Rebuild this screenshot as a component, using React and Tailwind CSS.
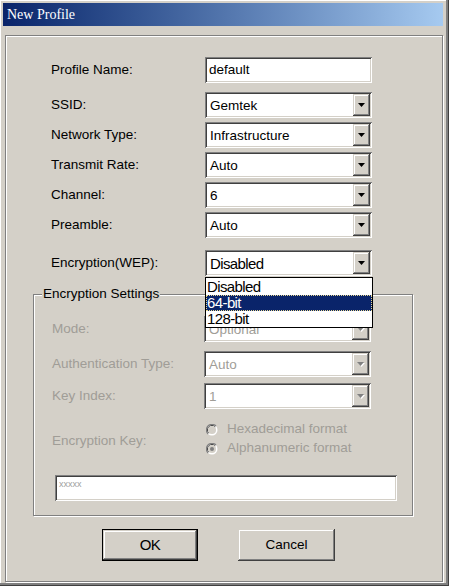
import React from "react";

const SANS = "font-['Liberation_Sans',Arial,sans-serif]";
const NARROW = "font-['Liberation_Sans',Arial,sans-serif] tracking-[-0.6px]";

// sunken 2px field edge, like a Win2000 edit box
const sunken =
  "shadow-[inset_1px_1px_#808080,inset_-1px_-1px_#ffffff,inset_2px_2px_#404040,inset_-2px_-2px_#d4d0c8]";
const raised =
  "shadow-[inset_-1px_-1px_#404040,inset_1px_1px_#d4d0c8,inset_-2px_-2px_#808080,inset_2px_2px_#ffffff]";

const Arrow = ({ disabled }) => (
  <div className={`w-[17px] h-full bg-[#d4d0c8] flex items-center justify-center ${raised}`}>
    <svg width="8" height="5" viewBox="0 0 8 5">
      {disabled && <path d="M1 1h7L4.5 5z" fill="#ffffff" />}
      <path d="M0 0h7L3.5 4z" fill={disabled ? "#808080" : "#000000"} />
    </svg>
  </div>
);

const Combo = ({ value, disabled, narrow, children }) => (
  <div className={`relative w-[167px] h-[26px] bg-white p-[2px] flex ${sunken}`}>
    <div
      className={`flex-1 flex items-center pl-[3px] pt-[2px] ${
        narrow ? `${NARROW} text-[15px]` : `${SANS} text-[13.5px]`
      } ${disabled ? "text-[#a09d97]" : "text-black"}`}
    >
      {value}
    </div>
    <Arrow disabled={disabled} />
    {children}
  </div>
);

const Row = ({ label, className = "", labelW = "w-[154px]", pl = "pl-[45px]", disabled, children }) => (
  <div className={`flex items-center h-[26px] ${pl} ${className}`}>
    <div className={`${labelW} ${SANS} text-[13.5px] ${disabled ? "text-[#a09d97]" : "text-black"}`}>
      {label}
    </div>
    {children}
  </div>
);

const Radio = ({ checked }) => (
  <svg width="12" height="12" viewBox="0 0 12 12">
    <circle cx="6" cy="6" r="5.5" fill="#ffffff" />
    <path d="M10 2 A5.5 5.5 0 0 0 2 10" fill="none" stroke="#808080" strokeWidth="1.2" />
    <path d="M9.2 2.8 A4.5 4.5 0 0 0 2.8 9.2" fill="none" stroke="#404040" strokeWidth="1" />
    <circle cx="6" cy="6" r="4" fill="#d4d0c8" />
    {checked && <circle cx="6" cy="6" r="2" fill="#808080" />}
  </svg>
);

const App = () => {
  return (
    <div className="w-[449px] h-[586px] bg-[#d4d0c8] flex flex-col pt-[3px] pl-[3px] pr-[6px] pb-[4px] shadow-[inset_-1px_-1px_#404040,inset_-3px_-3px_#808080,inset_1px_1px_#ffffff]">
      {/* Title bar */}
      <div className="h-[23px] flex items-center pl-[4px] bg-gradient-to-r from-[#0a246a] to-[#a6caf0]">
        <span className="font-['Liberation_Serif','Times_New_Roman',serif] text-[14px] text-white">
          New Profile
        </span>
      </div>

      {/* Body panel */}
      <div className="relative mt-[9px] ml-[2px] flex-1 flex flex-col border border-[#808080] shadow-[inset_1px_1px_#ffffff,1px_1px_#ffffff]">
        <Row label="Profile Name:" className="mt-[21px]">
          <div className={`w-[167px] h-[26px] bg-white flex items-center pl-[4px] ${SANS} text-[13.5px] ${sunken}`}>
            default
          </div>
        </Row>
        <Row label="SSID:" className="mt-[9px]">
          <Combo value="Gemtek" />
        </Row>
        <Row label="Network Type:" className="mt-[4px]">
          <Combo value="Infrastructure" />
        </Row>
        <Row label="Transmit Rate:" className="mt-[4px]">
          <Combo value="Auto" />
        </Row>
        <Row label="Channel:" className="mt-[4px]">
          <Combo value="6" />
        </Row>
        <Row label="Preamble:" className="mt-[4px]">
          <Combo value="Auto" />
        </Row>
        <Row label="Encryption(WEP):" className="mt-[12px]">
          <Combo value="Disabled" narrow>
            {/* open dropdown list */}
            <div className={`absolute z-10 top-[27px] left-0 w-[168px] h-[51px] bg-white border border-black flex flex-col ${NARROW} text-[15px] leading-[16px]`}>
              <div className="h-[17px] pl-[1px] pt-[1px]">Disabled</div>
              <div className="h-[16px] pl-[1px] bg-[#0a246a] text-white outline outline-1 outline-dotted outline-[#e8d890] -outline-offset-1">
                64-bit
              </div>
              <div className="h-[16px] pl-[1px]">128-bit</div>
            </div>
          </Combo>
        </Row>

        {/* Encryption settings group */}
        <fieldset className="mt-[10px] ml-[27px] w-[380px] border border-[#808080] shadow-[inset_1px_1px_#ffffff,1px_1px_#ffffff] pb-[14px] flex flex-col">
          <legend className={`ml-[8px] px-[1px] bg-[#d4d0c8] ${SANS} text-[13.5px] leading-[16px]`}>
            Encryption Settings
          </legend>
          <Row label="Mode:" disabled pl="pl-[18px]" labelW="w-[152px]" className="mt-[14px]">
            <Combo value="Optional" disabled />
          </Row>
          <Row label="Authentication Type:" disabled pl="pl-[18px]" labelW="w-[152px]" className="mt-[9px]">
            <Combo value="Auto" disabled />
          </Row>
          <Row label="Key Index:" disabled pl="pl-[18px]" labelW="w-[152px]" className="mt-[6px]">
            <Combo value="1" disabled />
          </Row>
          <div className="flex items-center pl-[18px] mt-[11px]">
            <div className={`w-[154px] pt-[4px] ${SANS} text-[13.5px] text-[#a09d97]`}>Encryption Key:</div>
            <div className={`flex flex-col ${SANS} text-[13.5px] text-[#a09d97]`}>
              <div className="h-[19px] flex items-center gap-[9px]">
                <Radio />
                <span>Hexadecimal format</span>
              </div>
              <div className="h-[19px] flex items-center gap-[9px]">
                <Radio checked />
                <span>Alphanumeric format</span>
              </div>
            </div>
          </div>
          <div className={`mt-[17px] ml-[21px] w-[342px] h-[26px] bg-white flex items-center pl-[4px] pb-[6px] ${sunken}`}>
            <span className={`${SANS} text-[9px] text-[#a0a0a0]`}>xxxxx</span>
          </div>
        </fieldset>

        {/* Buttons */}
        <div className="flex mt-[13px] ml-[96px] gap-[40px]">
          <div className="w-[96px] h-[32px] border border-black">
            <div className={`w-full h-full flex items-center justify-center ${raised} ${NARROW} text-[15px]`}>
              OK
            </div>
          </div>
          <div className={`w-[97px] h-[32px] flex items-center justify-center ${raised} ${SANS} text-[13.5px]`}>
            Cancel
          </div>
        </div>
      </div>
    </div>
  );
};

export default App;
